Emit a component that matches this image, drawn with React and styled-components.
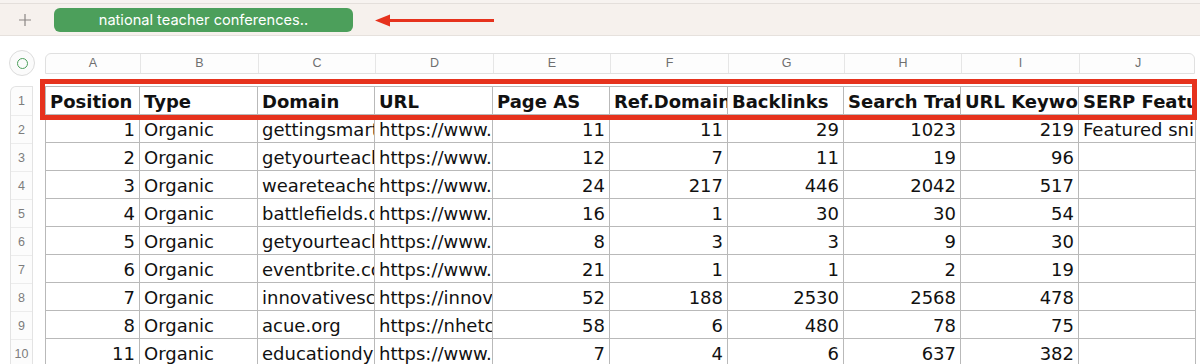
import styled, { createGlobalStyle } from "styled-components";

const GlobalStyle = createGlobalStyle`
  html, body {
    margin: 0;
    padding: 0;
    background: #ffffff;
    overflow: hidden;
  }
`;

const COLS = [
  { letter: "A", width: 94 },
  { letter: "B", width: 118 },
  { letter: "C", width: 117 },
  { letter: "D", width: 118 },
  { letter: "E", width: 117 },
  { letter: "F", width: 118 },
  { letter: "G", width: 116 },
  { letter: "H", width: 117 },
  { letter: "I", width: 118 },
  { letter: "J", width: 117 },
];

const HEADERS = [
  "Position",
  "Type",
  "Domain",
  "URL",
  "Page AS",
  "Ref.Domains",
  "Backlinks",
  "Search Traffic",
  "URL Keywords",
  "SERP Features",
];

const ROWS = [
  [1, "Organic", "gettingsmart.com", "https://www.gettingsmart.com", 11, 11, 29, 1023, 219, "Featured snippet"],
  [2, "Organic", "getyourteacherjob.com", "https://www.getyourteacherjob.com", 12, 7, 11, 19, 96, ""],
  [3, "Organic", "weareteachers.com", "https://www.weareteachers.com", 24, 217, 446, 2042, 517, ""],
  [4, "Organic", "battlefields.org", "https://www.battlefields.org", 16, 1, 30, 30, 54, ""],
  [5, "Organic", "getyourteacherjob.com", "https://www.getyourteacherjob.com", 8, 3, 3, 9, 30, ""],
  [6, "Organic", "eventbrite.com", "https://www.eventbrite.com", 21, 1, 1, 2, 19, ""],
  [7, "Organic", "innovativeschools.com", "https://innovativeschools.com", 52, 188, 2530, 2568, 478, ""],
  [8, "Organic", "acue.org", "https://nhetc.acue.org", 58, 6, 480, 78, 75, ""],
  [11, "Organic", "educationdynamics.com", "https://www.educationdynamics.com", 7, 4, 6, 637, 382, ""],
];

const gridTemplate = COLS.map((c) => `${c.width}px`).join(" ");

const Page = styled.div`
  width: 1200px;
  height: 364px;
  overflow: hidden;
  font-family: "Liberation Sans", Arial, sans-serif;
`;

const Chrome = styled.div`
  background: #f7f3f0;
  padding-top: 3px;
`;

const TabStrip = styled.div`
  height: 31px;
  display: flex;
  align-items: center;
  padding-left: 18px;
  border-top: 1px solid #e4dfdb;
  border-bottom: 1px solid #e6e1dd;
  background: #f6f1ed;
`;

const AddSheet = styled.div`
  width: 14px;
  height: 14px;
  display: flex;
  align-items: center;
  justify-content: center;
`;

const SheetTab = styled.div`
  margin-left: 22px;
  margin-top: 1px;
  width: 299px;
  height: 24px;
  border-radius: 6px;
  background: #4c9f5b;
  color: #ffffff;
  font-family: Inter, "Liberation Sans", sans-serif;
  font-size: 14.6px;
  display: flex;
  align-items: center;
  justify-content: center;
`;

const Arrow = styled.svg`
  margin-left: 22px;
  margin-top: 2px;
  display: block;
`;

const Sheet = styled.div`
  padding: 14px 0 0 9px;
`;

const HeaderLine = styled.div`
  display: flex;
  align-items: center;
  gap: 10px;
  height: 26px;
`;

const SelectAll = styled.div`
  width: 24px;
  height: 24px;
  border-radius: 50%;
  border: 1px solid #dcdcdc;
  background: #fbfbfb;
  display: flex;
  align-items: center;
  justify-content: center;
`;

const SelectDot = styled.div`
  width: 9px;
  height: 9px;
  border-radius: 50%;
  border: 1.5px solid #4c9f5b;
`;

const ColumnBar = styled.div`
  display: grid;
  grid-template-columns: ${gridTemplate};
  width: 1150px;
  height: 21px;
  border: 1px solid #e0e0e0;
  border-radius: 6px 6px 0 0;
  background: #fdfdfd;
  box-sizing: border-box;
`;

const ColumnLetter = styled.div`
  display: flex;
  align-items: center;
  justify-content: center;
  font-size: 12.5px;
  color: #6f6f6f;
  border-left: ${(p) => (p.$first ? "none" : "1px solid #e6e6e6")};
`;

const Body = styled.div`
  display: flex;
  gap: 12px;
  margin-top: 10px;
  margin-left: 1px;
`;

const RowNumbers = styled.div`
  width: 23px;
  border: 1px solid #e3e3e3;
  border-bottom: none;
  border-radius: 6px 0 0 0;
  background: #fcfcfc;
  box-sizing: border-box;
`;

const RowNumber = styled.div`
  height: 28px;
  display: flex;
  align-items: center;
  justify-content: center;
  font-size: 12.5px;
  color: #7d7d7d;
  border-top: ${(p) => (p.$first ? "none" : "1px solid #ececec")};
  box-sizing: border-box;
`;

const GridWrap = styled.div`
  position: relative;
`;

const Grid = styled.div`
  display: grid;
  grid-template-columns: ${gridTemplate};
  grid-auto-rows: 28px;
  width: 1150px;
  border-left: 1px solid #b9b9b9;
  border-top: 1px solid #b9b9b9;
  box-sizing: border-box;
`;

const Cell = styled.div`
  box-sizing: border-box;
  border-right: 1px solid #b9b9b9;
  border-bottom: 1px solid #b9b9b9;
  font-family: "DejaVu Sans", Verdana, sans-serif;
  font-size: 18px;
  font-weight: ${(p) => (p.$head ? 700 : 400)};
  color: #111111;
  white-space: nowrap;
  overflow: hidden;
  display: flex;
  align-items: center;
  justify-content: ${(p) => (p.$num ? "flex-end" : "flex-start")};
  padding: ${(p) => (p.$num ? "1px 4px 0 0" : "1px 0 0 4px")};
  background: #ffffff;
`;

const Highlight = styled.div`
  position: absolute;
  left: -5px;
  top: -7px;
  width: 1157px;
  height: 41px;
  border: 5px solid #e6321d;
  box-sizing: border-box;
  pointer-events: none;
`;

export default function App() {
  const rowCount = ROWS.length + 1;
  return (
    <Page>
      <GlobalStyle />
      <Chrome>
        <TabStrip>
          <AddSheet>
            <svg width="14" height="14" viewBox="0 0 14 14">
              <path d="M7 1v12M1 7h12" stroke="#8a8684" strokeWidth="1.2" fill="none" />
            </svg>
          </AddSheet>
          <SheetTab>national teacher conferences..</SheetTab>
          <Arrow width="119" height="13" viewBox="0 0 119 13">
            <path d="M12 6.5h107" stroke="#e6321d" strokeWidth="2.8" />
            <path d="M0 6.5L15 0.5v12z" fill="#e6321d" />
          </Arrow>
        </TabStrip>
      </Chrome>
      <Sheet>
        <HeaderLine>
          <SelectAll>
            <SelectDot />
          </SelectAll>
          <ColumnBar>
            {COLS.map((c, i) => (
              <ColumnLetter key={c.letter} $first={i === 0}>
                {c.letter}
              </ColumnLetter>
            ))}
          </ColumnBar>
        </HeaderLine>
        <Body>
          <RowNumbers>
            {Array.from({ length: rowCount }, (_, i) => (
              <RowNumber key={i} $first={i === 0}>
                {i + 1}
              </RowNumber>
            ))}
          </RowNumbers>
          <GridWrap>
            <Grid>
              {HEADERS.map((h) => (
                <Cell key={h} $head>
                  {h}
                </Cell>
              ))}
              {ROWS.map((row, r) =>
                row.map((v, c) => (
                  <Cell key={`${r}-${c}`} $num={typeof v === "number"}>
                    {v}
                  </Cell>
                ))
              )}
            </Grid>
            <Highlight />
          </GridWrap>
        </Body>
      </Sheet>
    </Page>
  );
}
